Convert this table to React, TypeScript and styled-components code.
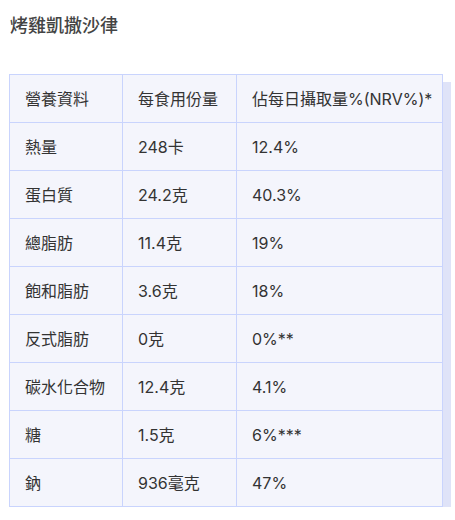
import { createGlobalStyle } from 'styled-components'
import styled from 'styled-components'

const ROWS: Array<[string, string, string]> = [
	['熱量', '248卡', '12.4%'],
	['蛋白質', '24.2克', '40.3%'],
	['總脂肪', '11.4克', '19%'],
	['飽和脂肪', '3.6克', '18%'],
	['反式脂肪', '0克', '0%**'],
	['碳水化合物', '12.4克', '4.1%'],
	['糖', '1.5克', '6%***'],
	['鈉', '936毫克', '47%'],
]

function App() {
	return (
		<>
			<GlobalStyle />
			<Page>
				<Title>烤雞凱撒沙律</Title>
				<Table>
					<thead>
						<tr>
							<HeadCell>營養資料</HeadCell>
							<HeadCell>每食用份量</HeadCell>
							<HeadCell>佔每日攝取量%(NRV%)*</HeadCell>
						</tr>
					</thead>
					<tbody>
						{ROWS.map(([name, serving, nrv]) => (
							<tr key={name}>
								<Cell>{name}</Cell>
								<Cell>{serving}</Cell>
								<Cell>{nrv}</Cell>
							</tr>
						))}
					</tbody>
				</Table>
			</Page>
		</>
	)
}

export default App

let GlobalStyle = createGlobalStyle`
	body {
		margin: 0;
		background: #fff;
		font-family: Inter, "Noto Sans CJK TC", sans-serif;
		color: #333;
	}
`

let Page = styled.div`
	padding: 14px 9px 0 9px;
`

let Title = styled.h1`
	margin: 0 0 36px 1px;
	font-size: 18px;
	font-weight: 500;
	line-height: 24px;
	color: #444;
`

let Table = styled.table`
	width: 434px;
	border-collapse: collapse;
	background: #f4f5fc;
	box-shadow: 8px 8px 0 #dfe3f8;
	table-layout: fixed;

	th:nth-child(1) { width: 113px; }
	th:nth-child(2) { width: 114px; }
`

let Cell = styled.td`
	height: 48px;
	padding: 0 0 0 15px;
	border: 1px solid #c9d4fd;
	font-size: 16px;
	line-height: 22px;
	color: #333;
	text-align: left;
	box-sizing: border-box;
	white-space: nowrap;
`

let HeadCell = styled(Cell).attrs({ as: 'th' })`
	font-weight: 400;
`
